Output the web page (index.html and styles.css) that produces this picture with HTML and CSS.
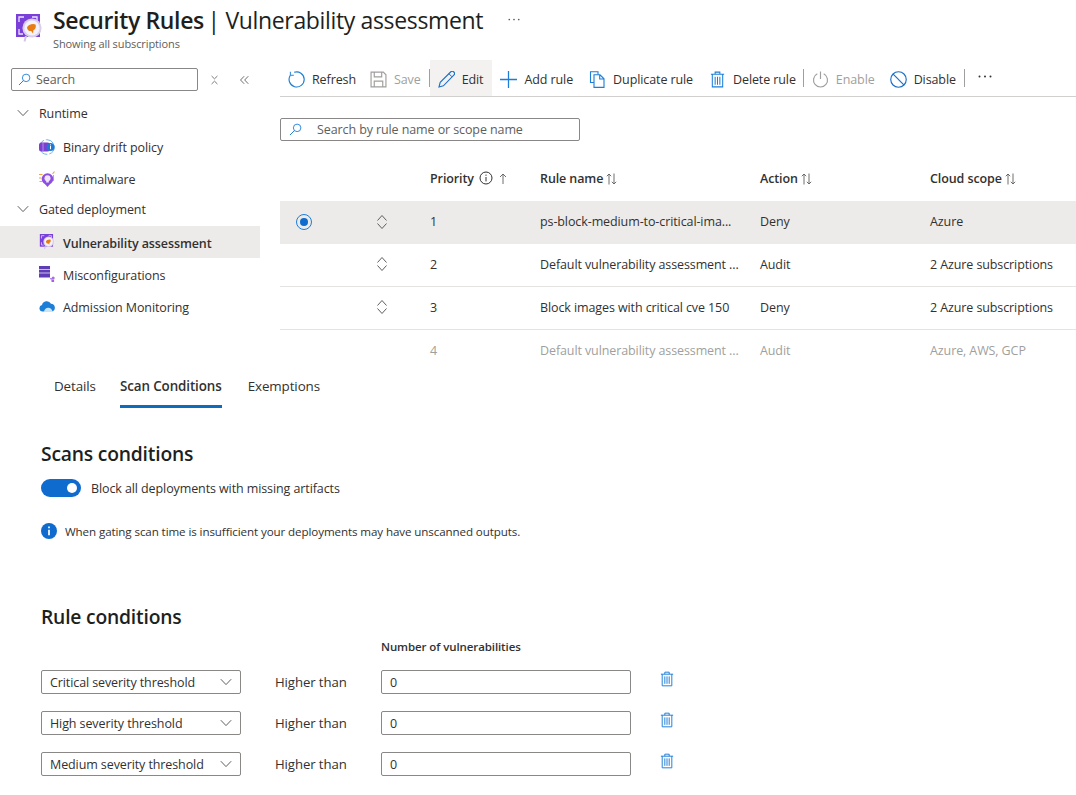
FILE: index.html
```html
<!DOCTYPE html>
<html lang="en">
<head>
    <meta charset="UTF-8">
    <title>Security Rules | Vulnerability assessment</title>
    <link rel="stylesheet" href="styles.css">
</head>
<body>

<svg class="sprites" width="0" height="0">
    <symbol id="trash" viewBox="0 0 16 18">
        <path d="M1 3.5h14M5.5 3.5V1.2h5v2.3M2.5 3.5v13.3h11V3.5" fill="none" stroke="currentColor" stroke-width="1.1"/>
        <path d="M5.5 6v8.5M8 6v8.5M10.5 6v8.5" fill="none" stroke="currentColor" stroke-width="1.1"/>
    </symbol>
    <symbol id="chev" viewBox="0 0 12 8">
        <path d="M.8 1.2 6 6.6l5.2-5.4" fill="none" stroke="currentColor" stroke-width="1"/>
    </symbol>
    <symbol id="updown" viewBox="0 0 12 16">
        <path d="M1.5 6.500 6 1.500l4.500 5" fill="none" stroke="#605e5c" stroke-width="1"/>
        <path d="M1.500 9.500 6 14.500l4.500-5" fill="none" stroke="#605e5c" stroke-width="1"/>
    </symbol>
    <symbol id="sort" viewBox="0 0 11 12">
        <path d="M3 11.500V1M.8 3.200 3 1l2.200 2.200M8 .5V11M5.800 8.800 8 11l2.200-2.200" fill="none" stroke="#605e5c" stroke-width=".9"/>
    </symbol>
    <symbol id="lens" viewBox="0 0 16 16">
        <circle cx="10" cy="6" r="4.600" fill="none" stroke="currentColor" stroke-width="1.100"/>
        <path d="M6.600 9.400 1.200 14.800" stroke="currentColor" stroke-width="1.200"/>
    </symbol>
    <symbol id="dots" viewBox="0 0 14 3">
        <circle cx="1.500" cy="1.500" r="1" fill="currentColor"/>
        <circle cx="7" cy="1.500" r="1" fill="currentColor"/>
        <circle cx="12.500" cy="1.500" r="1" fill="currentColor"/>
    </symbol>
    <symbol id="vuln" viewBox="0 0 26 29">
        <rect x="0" y="0" width="24" height="23" fill="#7a3fd9"/>
        <path d="M3 8V3h5M3 15v5h4M16 3h5v4" fill="none" stroke="#ece2ff" stroke-width="1.300"/>
        <circle cx="16" cy="14" r="9.600" fill="#d9cfe8"/>
        <circle cx="16" cy="14" r="7.600" fill="#f5f1fa"/>
        <path d="M11 13.500c1-3 6-4.500 8.500-3 .8 2 .2 5-2 5.500l-.5 3.500-1.800-2.500c-1.700.5-3.700-.5-4.200-3.500z" fill="#e67c12"/>
        <path d="M10 22l-1.500 5.500" stroke="#d4c4ea" stroke-width="2"/>
    </symbol>
</svg>

<header class="page-header">
    <svg class="header-icon"><use href="#vuln"/></svg>
    <div>
        <h1><b>Security Rules</b> | Vulnerability assessment</h1>
        <p>Showing all subscriptions</p>
    </div>
    <svg class="header-more"><use href="#dots"/></svg>
</header>

<div class="top-area">
    <nav class="sidebar">
        <div class="side-search-row">
            <div class="search-box side-search">
                <svg class="search-icon"><use href="#lens"/></svg>
                <span>Search</span>
            </div>
            <svg class="side-btn" viewBox="0 0 10 12"><path d="M1.500 1.200 5 4.600l3.500-3.400M1.500 10.800 5 7.400l3.500 3.400" fill="none" stroke="#605e5c"/></svg>
            <svg class="side-btn" viewBox="0 0 10 10"><path d="M4.600.8.600 5l4 4.200M9.200.8 5.200 5l4 4.200" fill="none" stroke="#605e5c"/></svg>
        </div>
        <div class="group-row group-first"><svg class="group-chev"><use href="#chev"/></svg>Runtime</div>
        <div class="side-item">
            <svg class="side-icon" viewBox="0 0 16 16">
                <circle cx="8" cy="8" r="7.300" fill="none" stroke="#6fb4ec" stroke-width="1" stroke-dasharray="9 2"/>
                <rect x="0" y="3.500" width="11" height="9" rx="2.500" fill="#7d3fd0"/>
                <rect x="3.500" y="3.500" width="1" height="9" fill="#b48ce8"/>
                <circle cx="11.500" cy="8" r="4" fill="#1f78d1"/>
                <path d="M11.500 7v3.200M11.500 5.400v1" stroke="#fff"/>
            </svg>
            Binary drift policy
        </div>
        <div class="side-item">
            <svg class="side-icon" viewBox="0 0 16 16">
                <path d="M0 3.500h3.500M0 7h2.500M.5 10.500h3M13.500 3 15.500 .5" fill="none" stroke="#f0a92e" stroke-width="1.200"/>
                <path d="M14.500 4v6" stroke="#f0a92e"/>
                <circle cx="8.500" cy="8" r="5.800" fill="#8d4fe0"/>
                <path d="M5.500 12.500 8.500 16l3-3.500z" fill="#8d4fe0"/>
                <circle cx="8.500" cy="7.300" r="3" fill="#efe6fa"/>
                <rect x="7.200" y="9.500" width="2.600" height="2" fill="#efe6fa"/>
            </svg>
            Antimalware
        </div>
        <div class="group-row"><svg class="group-chev"><use href="#chev"/></svg>Gated deployment</div>
        <div class="side-item low active">
            <svg class="side-icon"><use href="#vuln"/></svg>
            Vulnerability assessment
        </div>
        <div class="side-item low">
            <svg class="side-icon" viewBox="0 0 16 16">
                <rect x="0" y="0" width="11" height="11.500" fill="#5f3db5"/>
                <path d="M0 3.500h11M0 7h11" stroke="#c9bdf0" stroke-width="1.200"/>
                <path d="M11 12.500h3M11 12.500l3 2.500" stroke="#b78be8"/>
                <circle cx="14.200" cy="12" r="1.500" fill="#a76fe6"/>
                <circle cx="13.800" cy="15" r="1.400" fill="#a35fe6"/>
            </svg>
            Misconfigurations
        </div>
        <div class="side-item low">
            <svg class="side-icon" viewBox="0 0 16 16">
                <path d="M3.500 13.500A3.300 3.300 0 0 1 3 7a4.800 4.800 0 0 1 9-1.200 3.900 3.900 0 0 1 .8 7.700z" fill="#1c7ed6"/>
                <path d="M5 14a3.800 3.800 0 0 1 8.500 0z" fill="#c6e6f8"/>
            </svg>
            Admission Monitoring
        </div>
    </nav>

    <main class="rules-panel">
        <div class="toolbar">
            <div class="tool tool-first">
                <svg class="tool-icon" viewBox="0 0 18 18"><path d="M6.500 1.400A8 8 0 1 1 2.500 4.500" fill="none" stroke="#1c7ed6" stroke-width="1.200"/><path d="M2.500 .8v3.700h3.700" fill="none" stroke="#1c7ed6" stroke-width="1"/></svg>
                Refresh
            </div>
            <div class="tool disabled">
                <svg class="tool-icon" viewBox="0 0 16 16"><path d="M1 1h11.500L15 3.500V15H1z" fill="none" stroke="#a19f9d" stroke-width="1.100"/><path d="M4 1v4.500h7V1M4 15V9.500h8V15" fill="none" stroke="#a19f9d" stroke-width="1.100"/></svg>
                Save
            </div>
            <span class="tool-sep"></span>
            <div class="tool hovered">
                <svg class="tool-icon" viewBox="0 0 17 17"><path d="M1 16l1.200-4.600L12.600 1a1.900 1.900 0 0 1 3.200 3.200L5.400 14.800z" fill="none" stroke="#1c6fc9" stroke-width="1.100"/><path d="M11 2.800l3 3" stroke="#1c6fc9"/></svg>
                Edit
            </div>
            <div class="tool">
                <svg class="tool-icon" viewBox="0 0 16 16"><path d="M8 0v16M0 8h16" stroke="#1c7ed6" stroke-width="1.200"/></svg>
                Add rule
            </div>
            <div class="tool">
                <svg class="tool-icon" viewBox="0 0 16 17"><path d="M4.500 11.500H1V.8h7.500v3" fill="none" stroke="#1c7ed6" stroke-width="1.100"/><path d="M4.500 3.800h6l4 4v8.600h-10zM10.200 3.800v4.200h4.300" fill="#fff" stroke="#1c7ed6" stroke-width="1.100"/></svg>
                Duplicate rule
            </div>
            <div class="tool tool-tight">
                <svg class="tool-icon trash-blue"><use href="#trash"/></svg>
                Delete rule
            </div>
            <span class="tool-sep"></span>
            <div class="tool disabled tool-tight">
                <svg class="tool-icon" viewBox="0 0 16 16"><path d="M5 2.600a6.600 6.600 0 1 0 6 0M8 .5v7" fill="none" stroke="#a19f9d" stroke-width="1.100"/></svg>
                Enable
            </div>
            <div class="tool">
                <svg class="tool-icon" viewBox="0 0 16 16"><circle cx="8" cy="8" r="7.300" fill="none" stroke="#1c6fc9" stroke-width="1.100"/><path d="M3 3l10 10" stroke="#1c6fc9" stroke-width="1.100"/></svg>
                Disable
            </div>
            <span class="tool-sep"></span>
            <svg class="tool-more"><use href="#dots"/></svg>
        </div>

        <div class="search-box table-search">
            <svg class="search-icon"><use href="#lens"/></svg>
            <span>Search by rule name or scope name</span>
        </div>

        <div class="row head-row">
            <span></span><span></span>
            <span class="col-head">Priority
                <svg class="head-info" viewBox="0 0 14 14"><circle cx="7" cy="7" r="6" fill="none" stroke="#323130"/><path d="M7 6v4.400M7 3.600v1.200" stroke="#323130"/></svg>
                <svg class="head-up" viewBox="0 0 8 11"><path d="M4 11V1M1 4l3-3 3 3" fill="none" stroke="#605e5c" stroke-width=".9"/></svg>
            </span>
            <span class="col-head">Rule name <svg class="head-sort"><use href="#sort"/></svg></span>
            <span class="col-head">Action <svg class="head-sort"><use href="#sort"/></svg></span>
            <span class="col-head">Cloud scope <svg class="head-sort"><use href="#sort"/></svg></span>
        </div>
        <div class="row selected">
            <span class="radio"></span>
            <svg class="updown"><use href="#updown"/></svg>
            <span>1</span>
            <span>ps-block-medium-to-critical-ima...</span>
            <span>Deny</span>
            <span>Azure</span>
        </div>
        <div class="row lined">
            <span></span>
            <svg class="updown"><use href="#updown"/></svg>
            <span>2</span>
            <span>Default vulnerability assessment ...</span>
            <span>Audit</span>
            <span>2 Azure subscriptions</span>
        </div>
        <div class="row lined">
            <span></span>
            <svg class="updown"><use href="#updown"/></svg>
            <span>3</span>
            <span>Block images with critical cve 150</span>
            <span>Deny</span>
            <span>2 Azure subscriptions</span>
        </div>
        <div class="row dimmed">
            <span></span>
            <span></span>
            <span>4</span>
            <span>Default vulnerability assessment ...</span>
            <span>Audit</span>
            <span>Azure, AWS, GCP</span>
        </div>
    </main>
</div>

<section class="details">
    <div class="tabs">
        <span class="tab">Details</span>
        <span class="tab current">Scan Conditions</span>
        <span class="tab">Exemptions</span>
    </div>

    <h2 class="scans-title">Scans conditions</h2>
    <div class="toggle-row">
        <span class="toggle"></span>
        Block all deployments with missing artifacts
    </div>
    <div class="info-row">
        <svg class="info-icon" viewBox="0 0 16 16"><circle cx="8" cy="8" r="8" fill="#0f6cce"/><path d="M8 6.800v5.400M8 3.400v1.800" stroke="#fff" stroke-width="1.700"/></svg>
        When gating scan time is insufficient your deployments may have unscanned outputs.
    </div>

    <h2 class="rules-title">Rule conditions</h2>
    <div class="cond-grid">
        <span></span><span></span>
        <span class="cond-head">Number of vulnerabilities</span>
        <span></span>

        <div class="field select">Critical severity threshold<svg class="select-chev"><use href="#chev"/></svg></div>
        <span class="cond-label">Higher than</span>
        <div class="field">0</div>
        <svg class="cond-trash"><use href="#trash"/></svg>

        <div class="field select">High severity threshold<svg class="select-chev"><use href="#chev"/></svg></div>
        <span class="cond-label">Higher than</span>
        <div class="field">0</div>
        <svg class="cond-trash"><use href="#trash"/></svg>

        <div class="field select">Medium severity threshold<svg class="select-chev"><use href="#chev"/></svg></div>
        <span class="cond-label">Higher than</span>
        <div class="field">0</div>
        <svg class="cond-trash"><use href="#trash"/></svg>
    </div>
</section>

</body>
</html>
```

FILE: styles.css
```css
* {
    box-sizing: border-box;
}
body {
    margin: 0;
    height: 795px;
    overflow: hidden;
    background-color: #fff;
    color: #323130;
    font-family: "Open Sans", "Noto Sans", sans-serif;
    font-size: 12.5px;
    letter-spacing: -0.1px;
}
.sprites {
    display: block;
}

/* header */
.page-header {
    display: flex;
    height: 60px;
    padding: 5px 0 0 16px;
}
.header-icon {
    width: 26px;
    height: 29px;
    margin: 9px 11px 0 0;
}
.page-header h1 {
    margin: 0;
    font-size: 23px;
    line-height: 30px;
    font-weight: 400;
    color: #201f1e;
    letter-spacing: -0.35px;
}
.page-header h1 b {
    margin-right: -2px;
    font-weight: 600;
}
.page-header p {
    margin: 2px 0 0;
    font-size: 11px;
    line-height: 14px;
    color: #605e5c;
}
.header-more {
    width: 12px;
    height: 3px;
    margin: 13px 0 0 25px;
    color: #605e5c;
}

.top-area {
    display: flex;
    height: 309px;
}

/* sidebar */
.sidebar {
    width: 260px;
    flex: none;
}
.side-search-row {
    display: flex;
    align-items: center;
    padding: 8px 0 0 11px;
}
.search-box {
    display: flex;
    align-items: center;
    height: 23px;
    border: 1px solid #8a8886;
    border-radius: 2px;
    color: #605e5c;
}
.side-search {
    width: 187px;
}
.search-icon {
    width: 13px;
    height: 13px;
    margin: 0 5px 0 6px;
    color: #1c7ed6;
}
.side-btn {
    width: 9px;
    height: 10px;
    margin-left: 12px;
}
.side-btn + .side-btn {
    margin-left: 21px;
}
.group-row {
    display: flex;
    align-items: center;
    height: 22px;
    margin: 3px 0 6px;
    padding-left: 17px;
}
.group-first {
    margin: 11px 0 7px;
}
.group-chev {
    width: 12px;
    height: 8px;
    margin-right: 10px;
    color: #605e5c;
}
.side-item {
    display: flex;
    align-items: center;
    height: 32px;
    padding-left: 39px;
}
.side-item.low {
    padding-top: 2px;
}
.side-item.active {
    background-color: #edebe9;
    font-weight: 600;
}
.side-icon {
    width: 16px;
    height: 16px;
    margin-right: 8px;
}
.side-item.low .side-icon {
    margin-top: -2px;
}

/* toolbar */
.rules-panel {
    flex: 1;
    padding-left: 20px;
    min-width: 0;
}
.toolbar {
    display: flex;
    align-items: center;
    height: 37px;
    border-bottom: 1px solid #d2d0ce;
}
.tool {
    display: flex;
    align-items: center;
    height: 36px;
    padding: 2px 8px 0;
    white-space: nowrap;
}
.tool-first {
    padding-right: 6px;
}
.tool-tight {
    padding-right: 7px;
}
.tool.disabled {
    color: #a19f9d;
}
.tool.hovered {
    padding-right: 9px;
    background-color: #f3f2f1;
}
.tool-icon {
    width: 17px;
    height: 17px;
    margin-right: 7px;
}
.trash-blue {
    color: #1c7ed6;
}
.tool-sep {
    width: 1px;
    height: 18px;
    background-color: #a19f9d;
}
.tool-more {
    width: 14px;
    height: 3px;
    margin: -4px 0 0 13px;
    color: #323130;
}

/* rules table */
.table-search {
    width: 300px;
    margin-top: 21px;
}
.table-search .search-icon {
    margin: 0 15px 0 8px;
}
.row {
    display: grid;
    grid-template-columns: 80px 70px 110px 220px 170px 1fr;
    align-items: center;
    height: 43px;
    padding-bottom: 2px;
    white-space: nowrap;
}
.head-row {
    align-items: start;
    height: 60px;
    padding: 29px 0 0;
    font-weight: 600;
}
.col-head {
    display: flex;
    align-items: center;
    gap: 3px;
}
.head-info {
    width: 14px;
    height: 14px;
    margin: -2px 0 0 2px;
}
.head-up {
    width: 8px;
    height: 11px;
    margin-left: 3px;
}
.head-sort {
    width: 11px;
    height: 12px;
}
.row.selected {
    background-color: #edebe9;
}
.row.lined {
    border-bottom: 1px solid #e6e4e2;
}
.row.dimmed {
    color: #a19f9d;
}
.radio {
    position: relative;
    width: 16px;
    height: 16px;
    margin-left: 16px;
    border: 1px solid #1c7ed6;
    border-radius: 50%;
}
.radio::after {
    content: "";
    position: absolute;
    top: 3px;
    left: 3px;
    width: 8px;
    height: 8px;
    border-radius: 50%;
    background-color: #0f6cce;
}
.updown {
    width: 12px;
    height: 16px;
    margin-left: 16px;
}

/* tabs */
.tabs {
    display: flex;
    gap: 24px;
    padding-left: 54px;
}
.tab {
    height: 40px;
    padding-top: 9px;
    font-size: 13.4px;
}
.tab.current {
    margin-right: 2px;
    border-bottom: 3px solid #0f6cbd;
    font-weight: 600;
}

/* scans conditions */
.details {
    margin-top: -1px;
}
.details h2 {
    margin: 0;
    font-size: 19.3px;
    line-height: 24px;
    font-weight: 600;
    color: #201f1e;
    letter-spacing: -0.2px;
}
.scans-title {
    padding: 34px 0 0 41px;
}
.toggle-row {
    display: flex;
    align-items: center;
    gap: 10px;
    margin-top: 13px;
    padding-left: 41px;
}
.toggle {
    position: relative;
    width: 40px;
    height: 18px;
    border-radius: 9px;
    background-color: #0f6cce;
}
.toggle::after {
    content: "";
    position: absolute;
    top: 4px;
    right: 4px;
    width: 10px;
    height: 10px;
    border-radius: 50%;
    background-color: #fff;
}
.info-row {
    display: flex;
    align-items: center;
    gap: 8px;
    margin-top: 26px;
    padding-left: 41px;
    font-size: 11.6px;
}
.info-icon {
    width: 16px;
    height: 16px;
}

/* rule conditions */
.details .rules-title {
    padding: 66px 0 0 41px;
}
.cond-grid {
    display: grid;
    grid-template-columns: 200px 140px 250px 1fr;
    grid-template-rows: 32px 41px 41px 41px;
    align-items: center;
    padding-left: 41px;
}
.cond-label {
    padding-left: 34px;
    font-size: 13.2px;
}
.cond-head {
    align-self: start;
    padding-top: 10px;
    font-size: 11.5px;
    font-weight: 600;
}
.field {
    display: flex;
    align-items: center;
    height: 24px;
    padding: 1px 0 0 8px;
    border: 1px solid #8a8886;
    border-radius: 2px;
}
.select {
    justify-content: space-between;
    padding-right: 8px;
}
.select-chev {
    width: 12px;
    height: 8px;
    color: #605e5c;
}
.cond-trash {
    width: 14px;
    height: 16px;
    margin: -6px 0 0 29px;
    color: #1c7ed6;
}
```
